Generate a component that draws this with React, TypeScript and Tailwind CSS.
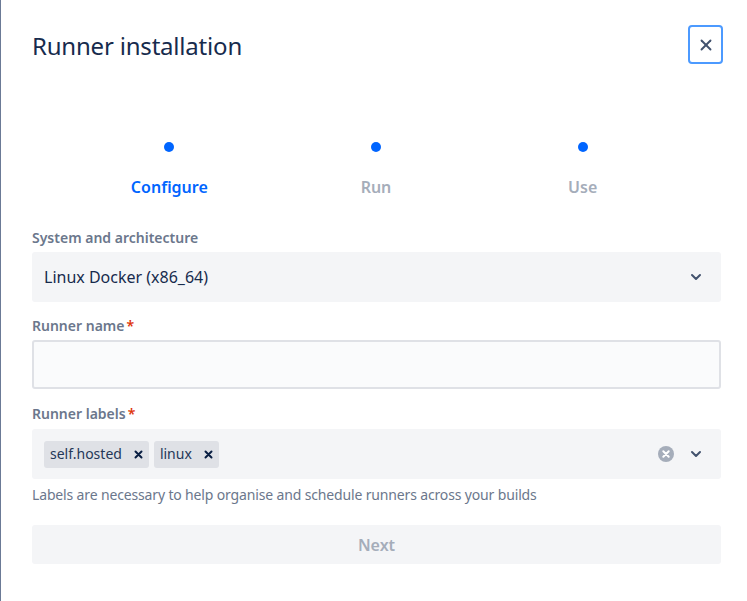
import { ChevronDown, X } from 'lucide-react';

const steps = [
    { name: 'Configure', active: true },
    { name: 'Run', active: false },
    { name: 'Use', active: false },
];

function FieldLabel({ text, required }: { text: string; required?: boolean }) {
    return (
        <div className="flex h-5 items-center text-sm font-semibold text-[#6b778c]">
            {text}
            {required && <span className="ml-0.5 text-[#de350b]">*</span>}
        </div>
    );
}

function Chip({ label }: { label: string }) {
    return (
        <div className="flex h-[27px] items-center rounded-[3px] bg-[#dfe1e6] pl-[6px] pr-[6px] text-sm text-[#253858]">
            <span>{label}</span>
            <svg className="ml-[12px]" width="9" height="9" viewBox="0 0 9 9">
                <path d="M1.5 1.5 L7.5 7.5 M7.5 1.5 L1.5 7.5" stroke="#091e42" strokeWidth="2" strokeLinecap="round" />
            </svg>
        </div>
    );
}

export default function App() {
    return (
        <div className="flex h-[601px] w-[747px] bg-white font-['Noto_Sans','Open_Sans',sans-serif]">
            <div className="w-px bg-[#6b7a96]" />
            <div className="flex-1 pl-[31px] pr-[26px]">
                <div className="flex items-center justify-between pt-[25px]">
                    <h1 className="pt-[2px] text-[24px] leading-[28px] tracking-[-0.2px] text-[#172b4d]">Runner installation</h1>
                    <button className="-mr-[2px] flex h-[39px] w-[35px] items-center justify-center rounded-[4px] border-2 border-[#4c9aff] text-[#42526e]">
                        <X size={18} strokeWidth={2.5} />
                    </button>
                </div>

                <div className="mt-[78px] grid grid-cols-3 px-[34px] pr-[35px]">
                    {steps.map((step) => (
                        <div key={step.name} className="flex flex-col items-center">
                            <div className="h-[10px] w-[10px] rounded-full bg-[#0065ff]" />
                            <div
                                className={
                                    step.active
                                        ? 'mt-[23px] text-base font-semibold leading-6 text-[#0065ff]'
                                        : 'mt-[23px] text-base font-semibold leading-6 text-[#a5adba]'
                                }
                            >
                                {step.name}
                            </div>
                        </div>
                    ))}
                </div>

                <div className="mt-[29px]">
                    <FieldLabel text="System and architecture" />
                    <div className="mt-[4px] flex h-[50px] items-center justify-between rounded-[3px] bg-[#f4f5f7] pl-[12px] pr-[17px]">
                        <span className="text-base text-[#172b4d]">Linux Docker (x86_64)</span>
                        <ChevronDown size={16} strokeWidth={3} className="text-[#42526e]" />
                    </div>
                </div>

                <div className="mt-[14px]">
                    <FieldLabel text="Runner name" required />
                    <div className="mt-[4px] h-[49px] rounded-[3px] border-2 border-[#dfe1e6] bg-[#fafbfc]" />
                </div>

                <div className="mt-[15px]">
                    <FieldLabel text="Runner labels" required />
                    <div className="mt-[5px] flex h-[50px] items-center justify-between rounded-[3px] bg-[#f4f5f7] pl-[12px] pr-[17px]">
                        <div className="flex gap-[5px]">
                            <Chip label="self.hosted" />
                            <Chip label="linux" />
                        </div>
                        <div className="flex items-center gap-[14px]">
                            <svg width="16" height="16" viewBox="0 0 16 16">
                                <circle cx="8" cy="8" r="8" fill="#a5adba" />
                                <path d="M5.3 5.3 L10.7 10.7 M10.7 5.3 L5.3 10.7" stroke="white" strokeWidth="2" strokeLinecap="round" />
                            </svg>
                            <ChevronDown size={16} strokeWidth={3} className="text-[#42526e]" />
                        </div>
                    </div>
                </div>

                <p className="mt-[6px] text-sm leading-5 tracking-[-0.15px] text-[#6b778c]">
                    Labels are necessary to help organise and schedule runners across your builds
                </p>

                <button className="mt-[20px] flex h-[39px] w-full items-center justify-center rounded-[3px] bg-[#f4f5f7] text-base font-semibold text-[#a5adba]">
                    Next
                </button>
            </div>
        </div>
    );
}
